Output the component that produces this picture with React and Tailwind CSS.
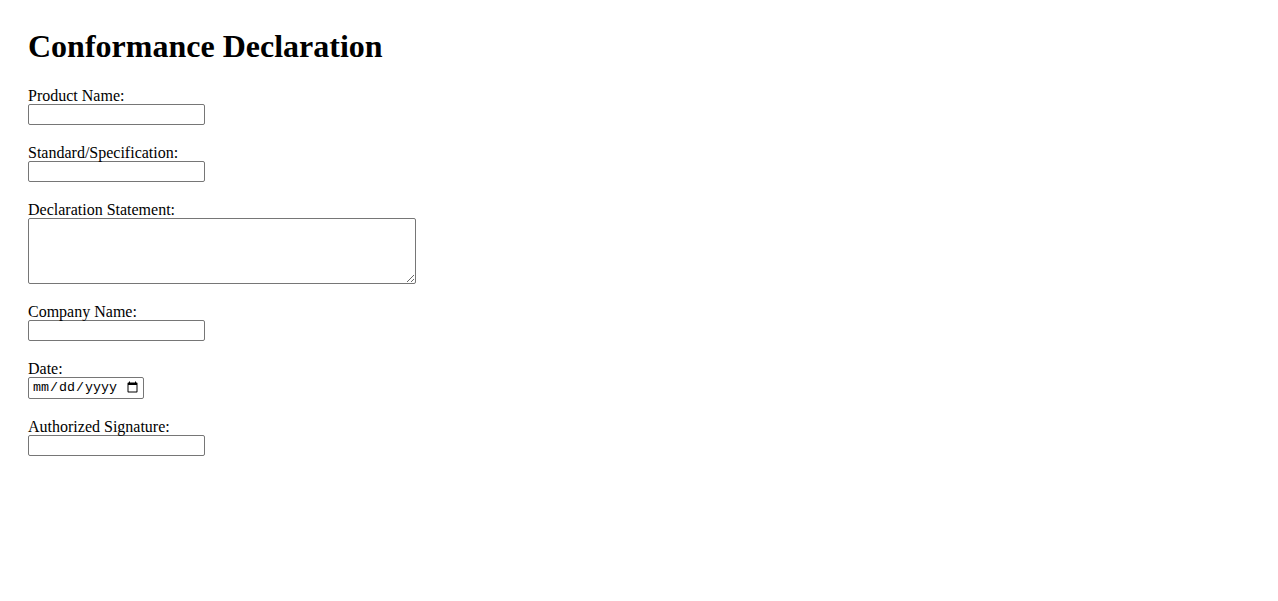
export default function App() {
  const serif = { fontFamily: '"Liberation Serif", "Times New Roman", serif' };
  const inputCls =
    "block w-[177px] h-[21px] border border-[#767676] rounded-[2px] bg-white px-[2px] text-[13.33px] text-black outline-none";
  const labelCls = "block text-[16px] leading-[17px] pt-[2px] text-black";
  return (
    <div className="min-h-[601px] bg-white px-[28px] pt-[28px]" style={serif}>
      <h1 className="text-[32px] leading-[37px] font-bold text-black mb-[20px]">
        Conformance Declaration
      </h1>
      <form className="flex flex-col gap-[17px]">
        <div>
          <label className={labelCls}>Product Name:</label>
          <input type="text" className={inputCls} />
        </div>
        <div>
          <label className={labelCls}>Standard/Specification:</label>
          <input type="text" className={inputCls} />
        </div>
        <div>
          <label className={labelCls}>Declaration Statement:</label>
          <textarea
            className="block w-[388px] h-[66px] border border-[#767676] rounded-[2px] bg-white p-[2px] text-[13.33px] resize"
            style={{ fontFamily: '"Liberation Mono", monospace' }}
          />
        </div>
        <div>
          <label className={labelCls}>Company Name:</label>
          <input type="text" className={inputCls} />
        </div>
        <div>
          <label className={labelCls}>Date:</label>
          <input
            type="date"
            className="block w-[116px] h-[22px] border border-[#767676] rounded-[2px] bg-white pl-[3px] pr-[2px] text-[13.33px] text-black"
            style={{ fontFamily: '"Liberation Mono", monospace' }}
          />
        </div>
        <div>
          <label className={labelCls}>Authorized Signature:</label>
          <input type="text" className={inputCls} />
        </div>
      </form>
    </div>
  );
}
